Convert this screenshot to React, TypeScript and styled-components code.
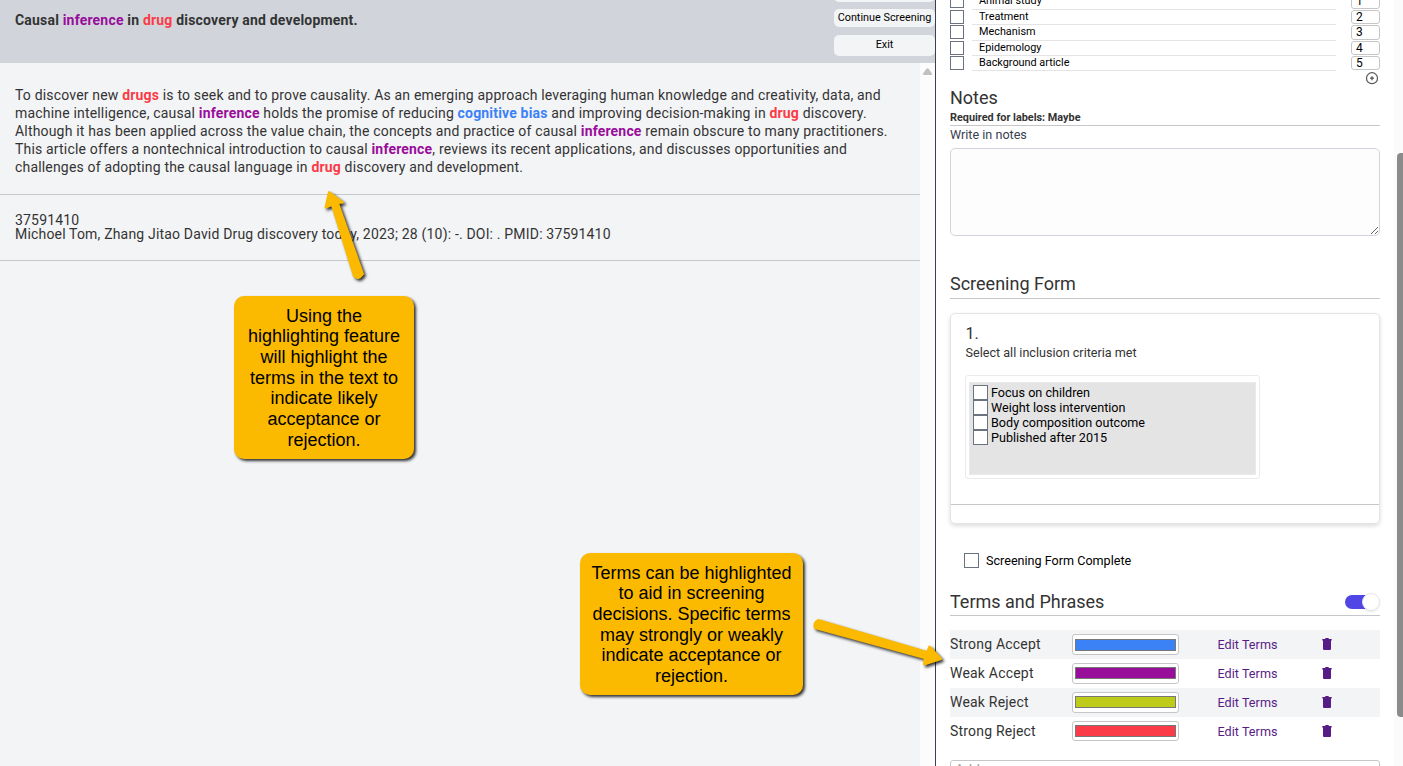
import React from "react";
import styled, { createGlobalStyle } from "styled-components";

const GlobalStyle = createGlobalStyle`
  * { box-sizing: border-box; }
  body { margin: 0; overflow: hidden; }
  body, input, textarea, button { font-family: Roboto, "Liberation Sans", sans-serif; }
`;

const Page = styled.div`
  position: relative;
  display: flex;
  width: 1403px;
  height: 766px;
  overflow: hidden;
  background: #fff;
  color: #333;
`;

/* ---------- article pane ---------- */

const ArticlePane = styled.main`
  width: 936px;
  flex: none;
  display: flex;
  flex-direction: column;
  border-right: 1px solid #374151;
  background: #f3f4f6;
`;

const ArticleHeader = styled.header`
  height: 63px;
  flex: none;
  display: flex;
  justify-content: space-between;
  background: #d1d5db;
`;

const ArticleTitle = styled.h1`
  margin: 0;
  padding: 11px 0 0 15px;
  font-size: 14px;
  line-height: 18px;
  font-weight: 700;
  letter-spacing: 0.19px;
`;

const HeaderButtons = styled.div`
  width: 101px;
  display: flex;
  flex-direction: column;
  margin-top: -17px;
`;

const HeaderButton = styled.button<{ $height: number; $gap: number; $bottom?: number }>`
  height: ${(p) => p.$height}px;
  margin: 0 0 ${(p) => p.$gap}px;
  flex: none;
  padding: 0 0 ${(p) => p.$bottom ?? 0}px;
  border: 0;
  border-radius: 5px;
  background: #f3f4f6;
  color: #000;
  font-size: 10.85px;
  line-height: 14px;
  white-space: nowrap;
`;

const ArticleScroll = styled.div`
  flex: 1;
  display: flex;
`;

const ArticleBody = styled.div`
  flex: 1;
`;

const ScrollGutter = styled.div`
  width: 15px;
  padding: 5px 0 0 2px;
  background: #fcfcfc;
  svg { display: block; }
`;

const Abstract = styled.p`
  height: 132px;
  margin: 0;
  padding: 23px 0 0 15px;
  border-bottom: 1px solid #c6c7ca;
  font-size: 14px;
  line-height: 18px;
  white-space: nowrap;
`;

const Line = styled.span`
  display: block;
  letter-spacing: 0.178px;
`;

const Term = styled.b<{ $color: string }>`
  color: ${(p) => p.$color};
  font-weight: 700;
`;

const Citation = styled.div`
  height: 66px;
  padding: 18px 0 0 15px;
  border-bottom: 1px solid #c6c7ca;
  font-size: 14px;
  line-height: 14px;
`;

/* ---------- side panel ---------- */

const SidePanel = styled.aside`
  width: 458px;
  padding: 0 14px;
  display: flex;
  flex-direction: column;
  & > * { flex: none; }
`;

const PanelScrollbar = styled.div`
  width: 9px;
  padding: 153px 0 0 3px;
  background: #fbfbfb;
`;

const PanelThumb = styled.div`
  height: 564px;
  border-radius: 4px 0 0 4px;
  background: #8b8b8b;
`;

const LabelList = styled.div`
  margin-top: -6px;
`;

const LabelRow = styled.div<{ $height: number }>`
  height: ${(p) => p.$height}px;
  display: flex;
`;

const Checkbox = styled.span<{ $size?: number }>`
  flex: none;
  width: ${(p) => p.$size ?? 15}px;
  height: ${(p) => p.$size ?? 15}px;
  border: 1px solid #6b7280;
  background: #fff;
`;

const LabelName = styled.span`
  width: 364px;
  margin: 0 15px 0 8px;
  padding-left: 7px;
  border-bottom: 1px solid #e4e4e5;
  color: #000;
  font-size: 10.85px;
  line-height: 13px;
`;

const LabelKey = styled.span`
  width: 29px;
  margin-bottom: 1px;
  padding-left: 4px;
  border: 1px solid #c6c6c8;
  border-radius: 3px;
  color: #000;
  font-size: 12px;
  line-height: 13px;
`;

const AddLabel = styled.div`
  height: 16px;
  display: flex;
  justify-content: flex-end;
  padding: 1px 1px 0 0;
`;

const SectionHeading = styled.h2`
  margin: 0;
  font-size: 18px;
  line-height: 22px;
  font-weight: 400;
`;

const NotesHeader = styled.div`
  height: 39px;
  border-bottom: 1px solid #c6c7ca;
`;

const NotesRequired = styled.div`
  padding-top: 1px;
  font-size: 10.85px;
  line-height: 16px;
  font-weight: 700;
`;

const NotesLabel = styled.label`
  height: 22px;
  padding-top: 1px;
  color: #374151;
  font-size: 12.6px;
  line-height: 16px;
`;

const NotesInput = styled.textarea`
  display: block;
  width: 430px;
  height: 88px;
  margin: 0;
  border: 1px solid #d1d5db;
  border-radius: 5px;
  background: #fdfdfd;
`;

const SectionHeader = styled.div<{ $top: number }>`
  display: flex;
  justify-content: space-between;
  height: 26px;
  margin-top: ${(p) => p.$top}px;
  border-bottom: 1px solid #c6c7ca;
`;

const FormCard = styled.section`
  height: 211px;
  margin-top: 14px;
  border: 1px solid #e3e4e6;
  border-radius: 5px;
  box-shadow: 0 2px 4px rgba(0, 0, 0, 0.14);
`;

const FormCardBody = styled.div`
  height: 191px;
  padding: 10px 14px 0;
  border-bottom: 1px solid #c6c7ca;
`;

const QuestionNumber = styled.div`
  padding-left: 0.5px;
  font-size: 16px;
  line-height: 19px;
`;

const QuestionText = styled.div`
  height: 32px;
  padding-left: 0.5px;
  font-size: 12.6px;
  line-height: 19px;
`;

const ChoiceFrame = styled.div`
  width: 295px;
  height: 104px;
  padding: 6px 3px 3px;
  border: 1px solid #ebebeb;
  border-radius: 3px;
`;

const ChoiceList = styled.div`
  height: 93px;
  padding: 2px 3px;
  border: 1px solid #eaeaea;
  background: #e4e4e4;
`;

const Choice = styled.div`
  display: flex;
  gap: 3px;
  height: 15px;
  color: #000;
  font-size: 12.6px;
  line-height: 15px;
`;

const CompleteRow = styled.div`
  display: flex;
  gap: 7px;
  margin: 29px 0 0 14px;
  color: #000;
  font-size: 12.6px;
  line-height: 15px;
`;

const TermsHeader = styled(SectionHeader)`
  ${SectionHeading} { padding-top: 1px; }
`;

const Toggle = styled.div`
  display: flex;
  justify-content: flex-end;
  width: 35px;
  height: 14px;
  margin-top: 5px;
  border-radius: 7px;
  background: linear-gradient(90deg, #4f46e5 0 26px, transparent 26px);
`;

const ToggleKnob = styled.div`
  width: 18px;
  height: 18px;
  margin-top: -2px;
  border: 1px solid #e5e7eb;
  border-radius: 50%;
  background: #fff;
  box-shadow: 0 1px 2px rgba(0, 0, 0, 0.1);
`;

const TermTable = styled.div`
  margin-top: 14.3px;
  svg { margin-bottom: 1px; }
`;

const TermRow = styled.div`
  display: grid;
  grid-template-columns: 122px 145.4px 104.6px 1fr;
  align-items: center;
  height: 28.8px;
  font-size: 14px;
  letter-spacing: 0.2px;
  &:nth-child(odd) { background: #f3f4f6; }
`;

const TermName = styled.span`
  padding-bottom: 0.5px;
`;

const SwatchFrame = styled.div`
  display: flex;
  align-items: center;
  width: 107px;
  height: 20.6px;
  padding: 0 2px;
  border: 1px solid #c6c6c8;
  border-radius: 3px;
  background: #fff;
`;

const Swatch = styled.div<{ $color: string }>`
  flex: 1;
  height: 12px;
  border: 1px solid #777;
  background: ${(p) => p.$color};
`;

const EditLink = styled.a`
  color: #581c87;
  font-size: 12.6px;
  letter-spacing: 0.06px;
`;

const AddInput = styled.input`
  height: 20px;
  margin-top: 14.5px;
  padding: 0 4px;
  border: 1px solid #c6c6c8;
  border-radius: 3px;
  font-size: 14px;
  line-height: 16px;
  &::placeholder { color: #a3a3a3; }
`;

/* ---------- annotations ---------- */

const Callout = styled.div<{ $x: number; $y: number; $w: number; $h: number }>`
  position: absolute;
  left: ${(p) => p.$x}px;
  top: ${(p) => p.$y}px;
  width: ${(p) => p.$w}px;
  height: ${(p) => p.$h}px;
  padding-top: 9.65px;
  border-radius: 10px;
  background: #fbba00;
  box-shadow: 2px 2px 3px rgba(0, 0, 0, 0.8);
  color: #000;
  font-family: "Liberation Sans", Arial, sans-serif;
  font-size: 18px;
  line-height: 20.67px;
  text-align: center;
  white-space: pre-line;
`;

const Arrows = styled.svg`
  position: absolute;
  inset: 0;
  pointer-events: none;
  filter: drop-shadow(2px 2px 1.5px rgba(0, 0, 0, 0.8));
`;

const RED = "#fb3b47";
const PURPLE = "#990d9b";
const BLUE = "#3b82f6";

const labels = [
  { name: "Animal study", height: 16 },
  { name: "Treatment", height: 15 },
  { name: "Mechanism", height: 16 },
  { name: "Epidemology", height: 15 },
  { name: "Background article", height: 15 },
];

const criteria = ["Focus on children", "Weight loss intervention", "Body composition outcome", "Published after 2015"];

const termGroups = [
  { name: "Strong Accept", color: BLUE },
  { name: "Weak Accept", color: PURPLE },
  { name: "Weak Reject", color: "#bfcb19" },
  { name: "Strong Reject", color: RED },
];

const TrashIcon = () => (
  <svg width="10" height="12" viewBox="0 0 10 12" fill="#581c87">
    <path d="M0.3 1H3L3.6 0H6.4L7 1H9.7V2.4H0.3Z" />
    <path d="M1 2H9V11Q9 12 8 12H2Q1 12 1 11Z" />
  </svg>
);

const PlusCircle = () => (
  <svg width="14" height="14" viewBox="0 0 14 14" fill="none" stroke="#555">
    <circle cx="7" cy="6.2" r="5.5" strokeWidth="1.2" />
    <path d="M5 6.2H9M7 4.2V8.2" strokeWidth="1.3" />
  </svg>
);

export default function App() {
  return (
    <Page>
      <GlobalStyle />
      <ArticlePane>
        <ArticleHeader>
          <ArticleTitle>
            Causal <Term $color={PURPLE}>inference</Term> in <Term $color={RED}>drug</Term> discovery and development.
          </ArticleTitle>
          <HeaderButtons>
            <HeaderButton $height={19} $gap={7} />
            <HeaderButton $height={18} $gap={8}>Continue Screening</HeaderButton>
            <HeaderButton $height={21} $gap={0} $bottom={2}>Exit</HeaderButton>
          </HeaderButtons>
        </ArticleHeader>
        <ArticleScroll>
          <ArticleBody>
            <Abstract>
              <Line>
                To discover new <Term $color={RED}>drugs</Term> is to seek and to prove causality. As an emerging
                approach leveraging human knowledge and creativity, data, and
              </Line>
              <Line>
                machine intelligence, causal <Term $color={PURPLE}>inference</Term> holds the promise of
                reducing <Term $color={BLUE}>cognitive bias</Term> and improving decision-making
                in <Term $color={RED}>drug</Term> discovery.
              </Line>
              <Line>
                Although it has been applied across the value chain, the concepts and practice of
                causal <Term $color={PURPLE}>inference</Term> remain obscure to many practitioners.
              </Line>
              <Line>
                This article offers a nontechnical introduction to causal <Term $color={PURPLE}>inference</Term>,
                reviews its recent applications, and discusses opportunities and
              </Line>
              <Line>
                challenges of adopting the causal language in <Term $color={RED}>drug</Term> discovery and development.
              </Line>
            </Abstract>
            <Citation>
              <Line>37591410</Line>
              <Line>Michoel Tom, Zhang Jitao David Drug discovery today, 2023; 28 (10): -. DOI: . PMID: 37591410</Line>
            </Citation>
          </ArticleBody>
          <ScrollGutter>
            <svg width="11" height="8" viewBox="0 0 11 8" fill="#c1c1c1">
              <path d="M4.2 1Q5.500 -0.6 6.8 1L10 5.500Q10.6 7 9 7H2Q0.4 7 1 5.500Z" />
            </svg>
          </ScrollGutter>
        </ArticleScroll>
      </ArticlePane>

      <SidePanel>
        <LabelList>
          {labels.map((label, i) => (
            <LabelRow key={label.name} $height={label.height}>
              <Checkbox $size={14} />
              <LabelName>{label.name}</LabelName>
              <LabelKey>{i + 1}</LabelKey>
            </LabelRow>
          ))}
        </LabelList>
        <AddLabel>
          <PlusCircle />
        </AddLabel>
        <NotesHeader>
          <SectionHeading>Notes</SectionHeading>
          <NotesRequired>Required for labels: Maybe</NotesRequired>
        </NotesHeader>
        <NotesLabel htmlFor="notes">Write in notes</NotesLabel>
        <NotesInput id="notes" />

        <SectionHeader $top={37}>
          <SectionHeading>Screening Form</SectionHeading>
        </SectionHeader>
        <FormCard>
          <FormCardBody>
            <QuestionNumber>1.</QuestionNumber>
            <QuestionText>Select all inclusion criteria met</QuestionText>
            <ChoiceFrame>
              <ChoiceList>
                {criteria.map((text) => (
                  <Choice key={text}>
                    <Checkbox />
                    {text}
                  </Choice>
                ))}
              </ChoiceList>
            </ChoiceFrame>
          </FormCardBody>
        </FormCard>
        <CompleteRow>
          <Checkbox />
          Screening Form Complete
        </CompleteRow>

        <TermsHeader $top={22}>
          <SectionHeading>Terms and Phrases</SectionHeading>
          <Toggle>
            <ToggleKnob />
          </Toggle>
        </TermsHeader>
        <TermTable>
          {termGroups.map((group) => (
            <TermRow key={group.name}>
              <TermName>{group.name}</TermName>
              <SwatchFrame>
                <Swatch $color={group.color} />
              </SwatchFrame>
              <EditLink>Edit Terms</EditLink>
              <TrashIcon />
            </TermRow>
          ))}
        </TermTable>
        <AddInput placeholder="Add group" />
      </SidePanel>
      <PanelScrollbar>
        <PanelThumb />
      </PanelScrollbar>

      <Callout $x={234} $y={296} $w={180} $h={163}>
        {"Using the\nhighlighting feature\nwill highlight the\nterms in the text to\nindicate likely\nacceptance or\nrejection."}
      </Callout>
      <Callout $x={580} $y={553} $w={223} $h={142}>
        {"Terms can be highlighted\nto aid in screening\ndecisions. Specific terms\nmay strongly or weakly\nindicate acceptance or\nrejection."}
      </Callout>
      <Arrows width="1403" height="766" viewBox="0 0 1403 766" fill="#fbba00" stroke="#fbba00" strokeLinejoin="round">
        <path d="M329 192L325.5 207.5L332 205L354 276Q358 281 363 274L338 203L343 202.500Z" strokeWidth="2" />
        <path d="M818 620Q813 623 815 628L924.500 658L924 664.500L941 659L929.500 646.500L927 652Z" strokeWidth="2" />
      </Arrows>
    </Page>
  );
}
